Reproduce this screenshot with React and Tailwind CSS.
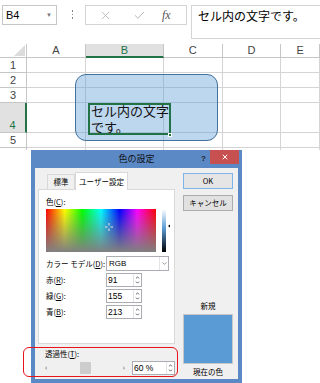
import React from "react";
import { X, Check, ChevronDown, ChevronUp } from "lucide-react";

const jp = "font-['Noto_Sans_CJK_JP',sans-serif]";
const sans = "font-['Liberation_Sans','Noto_Sans_CJK_JP',sans-serif]";

const columns = [
  { label: "A", w: "w-[61px]" },
  { label: "B", w: "w-[81px]", sel: true },
  { label: "C", w: "w-[61px]" },
  { label: "D", w: "w-[61px]" },
  { label: "E", w: "w-[40px]" },
];

const rows = [
  { n: 1, h: "h-[15px]" },
  { n: 2, h: "h-[15px]" },
  { n: 3, h: "h-[15px]" },
  { n: 4, h: "h-[30px]", sel: true },
  { n: 5, h: "h-[15px]" },
];

const Spectrum = () => (
  <svg width="110" height="43" className="block">
    <defs>
      <linearGradient id="hue" x1="0" y1="0" x2="1" y2="0">
        <stop offset="0" stopColor="#ff0000" />
        <stop offset="0.17" stopColor="#ffff00" />
        <stop offset="0.33" stopColor="#00ff00" />
        <stop offset="0.5" stopColor="#00ffff" />
        <stop offset="0.67" stopColor="#0000ff" />
        <stop offset="0.83" stopColor="#ff00ff" />
        <stop offset="1" stopColor="#ff0000" />
      </linearGradient>
      <linearGradient id="sat" x1="0" y1="0" x2="0" y2="1">
        <stop offset="0" stopColor="#808080" stopOpacity="0" />
        <stop offset="1" stopColor="#808080" stopOpacity="1" />
      </linearGradient>
    </defs>
    <rect width="110" height="43" fill="url(#hue)" />
    <rect width="110" height="43" fill="url(#sat)" />
    <g stroke="#e8e8e8" strokeWidth="1">
      <line x1="63" y1="14" x2="63" y2="16.5" />
      <line x1="63" y1="19.5" x2="63" y2="22" />
      <line x1="59" y1="18" x2="61.5" y2="18" />
      <line x1="64.5" y1="18" x2="67" y2="18" />
    </g>
  </svg>
);

const LumBar = () => (
  <svg width="8" height="43" className="block">
    <defs>
      <linearGradient id="lum" x1="0" y1="0" x2="0" y2="1">
        <stop offset="0" stopColor="#ffffff" />
        <stop offset="0.45" stopColor="#5b9bd5" />
        <stop offset="1" stopColor="#000000" />
      </linearGradient>
    </defs>
    <rect width="4" height="43" fill="url(#lum)" />
    <polygon points="6,17 8,15.5 8,18.5" fill="#000" />
  </svg>
);

const Spin = ({ value, w = "w-[36px]" }) => (
  <div className={`${w} h-[14px] flex bg-white border border-[#abadb3]`}>
    <div className={`flex-1 flex items-center pl-[1px] text-[8.5px] ${sans}`}>{value}</div>
    <div className="w-[8px] flex flex-col items-center justify-center border-l border-[#e3e3e3] text-[#444]">
      <ChevronUp size={5} strokeWidth={4} />
      <ChevronDown size={5} strokeWidth={4} />
    </div>
  </div>
);

const Field = ({ label, k, value }) => (
  <div className="flex items-center h-[14px]">
    <div className={`w-[60px] text-[7.5px] ${jp}`}>
      {label}(<span className="underline">{k}</span>):
    </div>
    <Spin value={value} />
  </div>
);

export default function App() {
  return (
    <div className="relative w-[320px] h-[383px] overflow-hidden bg-white">
      {/* formula bar */}
      <div className="h-[44px] flex items-start pt-[5px]">
        <div className={`ml-[2px] w-[55px] h-[20px] border border-[#c6c6c6] flex items-center justify-between pl-[3px] pr-[4px] text-[11px] ${sans}`}>
          <span>B4</span>
          <span className="text-[6px] text-[#777]">▼</span>
        </div>
        <div className="ml-[15px] mt-[5px] flex flex-col gap-[2px]">
          <div className="w-[1px] h-[1.5px] bg-[#888]" />
          <div className="w-[1px] h-[1.5px] bg-[#888]" />
          <div className="w-[1px] h-[1.5px] bg-[#888]" />
        </div>
        <div className="ml-[12px] w-[102px] h-[20px] border border-[#d4d4d4] flex items-center pl-[13px]">
          <X size={13} strokeWidth={1.3} className="text-[#a8a8a8]" />
          <Check size={13} strokeWidth={1.5} className="ml-[21px] text-[#a8a8a8]" />
          <span className="ml-[16px] italic text-[12px] text-[#555] font-['Liberation_Serif',serif]">fx</span>
        </div>
        <div className={`ml-[4px] flex-1 h-[34px] border border-[#d4d4d4] border-r-0 pl-[6px] pt-[1px] text-[12px] ${jp}`}>
          セル内の文字です。
        </div>
      </div>

      {/* sheet */}
      <div className={`text-[11px] text-[#444] ${sans}`}>
        <div className="flex h-[14px]">
          <div className="w-[28px] border-r border-b border-[#c6c6c6] flex items-end justify-end pr-[1px] pb-[1px]">
            <svg width="11" height="11"><polygon points="11,0 11,11 0,11" fill="#dcdcdc" /></svg>
          </div>
          {columns.map((c) =>
            c.sel ? (
              <div key={c.label} className={`${c.w} bg-[#e1e1e1] border-r border-[#c6c6c6] border-b-2 border-b-[#217346] text-[#217346] flex items-center justify-center leading-none`}>
                {c.label}
              </div>
            ) : (
              <div key={c.label} className={`${c.w} border-r border-b border-[#c6c6c6] flex items-center justify-center leading-none`}>
                {c.label}
              </div>
            )
          )}
        </div>
        {rows.map((r) => (
          <div key={r.n} className={`flex ${r.h}`}>
            {r.sel ? (
              <div className="w-[28px] bg-[#e1e1e1] border-b border-[#c6c6c6] border-r-2 border-r-[#217346] text-[#217346] flex items-end justify-center leading-none pb-[1px]">
                {r.n}
              </div>
            ) : (
              <div className="w-[28px] border-r border-b border-[#c6c6c6] flex items-center justify-center leading-none">
                {r.n}
              </div>
            )}
            {columns.map((c) => (
              <div key={c.label} className={`${c.w} border-r border-b border-[#d4d4d4]`} />
            ))}
          </div>
        ))}
        <div className="flex h-[2px]">
          <div className="w-[28px] border-r border-[#c6c6c6]" />
          {columns.map((c) => (
            <div key={c.label} className={`${c.w} border-r border-[#d4d4d4]`} />
          ))}
        </div>
      </div>

      {/* shape with its text */}
      <div className="absolute left-[75px] top-[74px] w-[143px] h-[67px] rounded-[11px] border-[1.5px] border-[#41719c] bg-[#5b9bd5]/40" />
      <div className={`absolute left-[91px] top-[103px] w-[79px] h-[33px] overflow-hidden text-[13px] leading-[16px] text-[#111] ${jp}`}>
        <div className="whitespace-nowrap">セル内の文字</div>
        <div>です。</div>
      </div>

      {/* active cell */}
      <div className="absolute left-[88px] top-[103px] w-[83px] h-[32px] border-2 border-[#217346]" />
      <div className="absolute left-[168px] top-[133px] w-[4px] h-[4px] bg-[#217346] border border-white" />

      {/* dialog */}
      <div className="absolute left-[31px] top-[150px] w-[211px] h-[233px] bg-[#5b89c6] flex flex-col">
        <div className={`relative h-[18px] flex items-center justify-center text-[9px] text-[#111] ${jp}`}>
          色の設定
          <span className={`absolute left-[170px] top-[3px] text-[8px] font-bold text-[#222] ${sans}`}>?</span>
          <div className="absolute left-[179px] top-0 w-[29px] h-[14px] bg-[#c75050] flex items-center justify-center">
            <X size={8} strokeWidth={3} className="text-white" />
          </div>
        </div>
        <div className="mx-[4px] mb-[4px] flex-1 bg-[#f0f0f0] flex">
          {/* left column */}
          <div className="w-[143px] pl-[3px] pt-[4px] flex flex-col">
            <div className={`flex items-end pl-[9px] text-[7.5px] ${jp}`}>
              <div className="w-[28px] h-[15px] border border-b-0 border-[#d9d9d9] bg-[#f0f0f0] flex items-center justify-center">標準</div>
              <div className="relative z-10 -mb-[1px] w-[53px] h-[18px] border border-b-0 border-[#d9d9d9] bg-white flex items-center justify-center">ユーザー設定</div>
            </div>
            <div className="w-[137px] h-[155px] bg-white border border-[#d9d9d9] pl-[7px] pt-[7px]">
              <div className={`text-[7.5px] leading-[9px] ${jp}`}>
                色(<span className="underline">C</span>):
              </div>
              <div className="mt-[3px] flex items-start">
                <Spectrum />
                <div className="ml-[6px]">
                  <LumBar />
                </div>
              </div>
              <div className="mt-[4px] flex items-center h-[15px]">
                <div className={`w-[60px] text-[7.5px] ${jp}`}>
                  カラー モデル(<span className="underline">D</span>):
                </div>
                <div className="w-[63px] h-[15px] flex bg-white border border-[#abadb3]">
                  <div className={`flex-1 flex items-center pl-[2px] text-[8px] ${sans}`}>RGB</div>
                  <div className="w-[9px] flex items-center justify-center border-l border-[#e3e3e3] text-[#555]">
                    <ChevronDown size={7} strokeWidth={2} />
                  </div>
                </div>
              </div>
              <div className="mt-[2px] flex flex-col gap-[2px]">
                <Field label="赤" k="R" value="91" />
                <Field label="緑" k="G" value="155" />
                <Field label="青" k="B" value="213" />
              </div>
            </div>
            <div className={`mt-[5px] pl-[7px] text-[7.5px] leading-[9px] ${jp}`}>
              透過性(<span className="underline">T</span>):
            </div>
            <div className="mt-[3px] flex items-center h-[14px]">
              <div className="ml-[4px] w-[86px] h-[12px] flex items-center justify-between px-[3px] text-[7px] text-[#666]">
                <span>‹</span>
                <div className="w-[11px] h-[12px] bg-[#cdcdcd]" />
                <span>›</span>
              </div>
              <div className="ml-[4px]">
                <Spin value="60 %" w="w-[43px]" />
              </div>
            </div>
          </div>
          {/* right column */}
          <div className={`ml-[5px] w-[50px] pt-[5px] pb-[2px] flex flex-col text-[7.5px] ${jp}`}>
            <div className="h-[16px] border border-[#7eb4ea] bg-[#e5e5e5] flex items-center justify-center">OK</div>
            <div className="mt-[6px] h-[16px] border border-[#acacac] bg-[#e1e1e1] flex items-center justify-center">キャンセル</div>
            <div className="mt-auto text-center leading-[10px]">新規</div>
            <div className="mt-[3px] h-[50px] bg-[#5b9bd5] border border-[#c8c8c8]" />
            <div className="mt-[3px] text-center leading-[10px]">現在の色</div>
          </div>
        </div>
      </div>

      {/* highlight */}
      <div className="absolute left-[23px] top-[347px] w-[155px] h-[30px] rounded-[6px] border-[1.5px] border-[#e8141c]" />
    </div>
  );
}
